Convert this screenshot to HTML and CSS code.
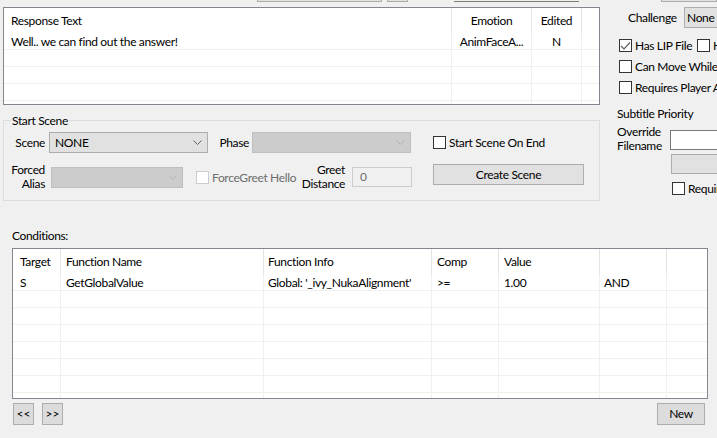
FILE: index.html
```html
<!DOCTYPE html>
<html>
<head>
<meta charset="utf-8">
<link rel="stylesheet" href="styles.css">
</head>
<body>
<div class="top">
  <span class="tp tp1"></span><span class="tp tp2"></span><span class="tp tp3"></span><span class="tp tp4"></span>
</div>
<div class="main">
  <div class="left">
    <div class="lv lv-resp">
      <div class="row hdr"><div class="c r1 first">Response Text</div><div class="c r2 ctr">Emotion</div><div class="c r3 ctr">Edited</div><div class="c r4"></div></div>
      <div class="row"><div class="c r1 first">Well.. we can find out the answer!</div><div class="c r2 ctr">AnimFaceA...</div><div class="c r3 ctr">N</div><div class="c r4"></div></div>
      <div class="row"><div class="c r1"></div><div class="c r2"></div><div class="c r3"></div><div class="c r4"></div></div>
      <div class="row"><div class="c r1"></div><div class="c r2"></div><div class="c r3"></div><div class="c r4"></div></div>
      <div class="row"><div class="c r1"></div><div class="c r2"></div><div class="c r3"></div><div class="c r4"></div></div>
      <div class="row"><div class="c r1"></div><div class="c r2"></div><div class="c r3"></div><div class="c r4"></div></div>
    </div>
    <div class="group">
      <div class="gtitle">Start Scene</div>
      <div class="grow grow1">
        <div class="lbl lbl-scene">Scene</div>
        <div class="combo combo-scene"><span>NONE</span><svg class="chev" width="9" height="5" viewBox="0 0 9 5"><path d="M0.5 0.5 L4.5 4.5 L8.5 0.5" fill="none" stroke="#606060" stroke-width="1"/></svg></div>
        <div class="lbl lbl-phase">Phase</div>
        <div class="combo combo-phase dis"><span></span><svg class="chev" width="9" height="5" viewBox="0 0 9 5"><path d="M0.5 0.5 L4.5 4.5 L8.5 0.5" fill="none" stroke="#b4b4b4" stroke-width="1"/></svg></div>
        <div class="cbx cbx-sse"><svg class="box" width="13" height="13" viewBox="0 0 13 13"><rect x="0.5" y="0.5" width="12" height="12" fill="#fff" stroke="#333"/></svg><span>Start Scene On End</span></div>
      </div>
      <div class="grow grow2">
        <div class="lbl lbl-alias">Forced<br>Alias</div>
        <div class="combo combo-alias dis"><span></span><svg class="chev" width="9" height="5" viewBox="0 0 9 5"><path d="M0.5 0.5 L4.5 4.5 L8.5 0.5" fill="none" stroke="#b4b4b4" stroke-width="1"/></svg></div>
        <div class="cbx cbx-fg disabled"><svg class="box" width="13" height="13" viewBox="0 0 13 13"><rect x="0.5" y="0.5" width="12" height="12" fill="#fff" stroke="#cccccc"/></svg><span>ForceGreet Hello</span></div>
        <div class="lbl lbl-greet">Greet<br>Distance</div>
        <div class="tbox tbox-greet">0</div>
        <div class="btn btn-create">Create Scene</div>
      </div>
    </div>
  </div>
  <div class="right">
    <div class="chal"><span class="chal-lbl">Challenge</span><div class="combo combo-chal"><span>None</span></div></div>
    <div class="rrow rrow1">
      <div class="cbx cbx-lip"><svg class="box" width="13" height="13" viewBox="0 0 13 13"><rect x="0.5" y="0.5" width="12" height="12" fill="#fff" stroke="#333"/><path d="M2 7 L5 10 L11 3.5" fill="none" stroke="#606060" stroke-width="1.2"/></svg><span>Has LIP File</span></div>
      <div class="cbx"><svg class="box" width="13" height="13" viewBox="0 0 13 13"><rect x="0.5" y="0.5" width="12" height="12" fill="#fff" stroke="#333"/></svg><span>Has Voice</span></div>
    </div>
    <div class="rrow">
      <div class="cbx"><svg class="box" width="13" height="13" viewBox="0 0 13 13"><rect x="0.5" y="0.5" width="12" height="12" fill="#fff" stroke="#333"/></svg><span>Can Move While Greeting</span></div>
    </div>
    <div class="rrow">
      <div class="cbx"><svg class="box" width="13" height="13" viewBox="0 0 13 13"><rect x="0.5" y="0.5" width="12" height="12" fill="#fff" stroke="#333"/></svg><span>Requires Player Activation</span></div>
    </div>
    <div class="sub-lbl">Subtitle Priority</div>
    <div class="ovr">
      <div class="ovr-lbl">Override<br>Filename</div>
      <div class="tbox tbox-ovr"></div>
    </div>
    <div class="btn btn-ovr"></div>
    <div class="rrow rrow-req">
      <div class="cbx"><svg class="box" width="13" height="13" viewBox="0 0 13 13"><rect x="0.5" y="0.5" width="12" height="12" fill="#fff" stroke="#333"/></svg><span>Requires</span></div>
    </div>
  </div>
</div>
<div class="cond-lbl">Conditions:</div>
<div class="lv lv-cond">
  <div class="row hdr"><div class="c k1 first">Target</div><div class="c k2">Function Name</div><div class="c k3">Function Info</div><div class="c k4">Comp</div><div class="c k5">Value</div><div class="c k6"></div><div class="c k7"></div></div>
  <div class="row"><div class="c k1 first">S</div><div class="c k2">GetGlobalValue</div><div class="c k3">Global: '_ivy_NukaAlignment'</div><div class="c k4">&gt;=</div><div class="c k5">1.00</div><div class="c k6">AND</div><div class="c k7"></div></div>
  <div class="row"><div class="c k1"></div><div class="c k2"></div><div class="c k3"></div><div class="c k4"></div><div class="c k5"></div><div class="c k6"></div><div class="c k7"></div></div>
  <div class="row"><div class="c k1"></div><div class="c k2"></div><div class="c k3"></div><div class="c k4"></div><div class="c k5"></div><div class="c k6"></div><div class="c k7"></div></div>
  <div class="row"><div class="c k1"></div><div class="c k2"></div><div class="c k3"></div><div class="c k4"></div><div class="c k5"></div><div class="c k6"></div><div class="c k7"></div></div>
  <div class="row"><div class="c k1"></div><div class="c k2"></div><div class="c k3"></div><div class="c k4"></div><div class="c k5"></div><div class="c k6"></div><div class="c k7"></div></div>
  <div class="row"><div class="c k1"></div><div class="c k2"></div><div class="c k3"></div><div class="c k4"></div><div class="c k5"></div><div class="c k6"></div><div class="c k7"></div></div>
  <div class="row"><div class="c k1"></div><div class="c k2"></div><div class="c k3"></div><div class="c k4"></div><div class="c k5"></div><div class="c k6"></div><div class="c k7"></div></div>
  <div class="row"><div class="c k1"></div><div class="c k2"></div><div class="c k3"></div><div class="c k4"></div><div class="c k5"></div><div class="c k6"></div><div class="c k7"></div></div>
</div>
<div class="bottom">
  <div class="btn btn-nav">&lt;&lt;</div>
  <div class="btn btn-nav">&gt;&gt;</div>
  <div class="btn btn-new">New</div>
</div>
</body>
</html>
```
FILE: styles.css
```css
* { box-sizing: border-box; }
html, body { margin: 0; padding: 0; }
body {
  width: 717px;
  height: 438px;
  overflow: hidden;
  background: #f0f0f0;
  font-family: Lato, "Liberation Sans", sans-serif;
  font-size: 12px;
  letter-spacing: -0.35px;
  color: #000;
  white-space: nowrap;
}

/* top strip (bottoms of controls above the view) */
.top { display: flex; height: 2px; }
.tp { height: 2px; border: 1px solid #adadad; border-top: 0; background: #e1e1e1; }
.tp1 { margin-left: 257px; width: 135px; }
.tp2 { margin-left: 5px; width: 22px; }
.tp3 { margin-left: 46px; width: 135px; height: 2px; border: 0; border-bottom: 1px solid #7a7a7a; background: #f0f0f0; }
.tp4 { margin-left: 82px; width: 60px; }

.main { display: flex; }
.left { width: 597px; margin-left: 3px; flex: none; }
.right { flex: 1; overflow: hidden; }

/* list views */
.lv { background: #fff; border: 1px solid #828790; overflow: hidden; }
.row { display: flex; height: 17px; border-bottom: 1px solid #f0f0f0; line-height: 17px; }
.row.hdr { height: 25px; border-bottom: 0; line-height: 25px; }
.c { flex: none; height: 100%; border-right: 1px solid #f0f0f0; padding-left: 5px; overflow: hidden; }
.hdr .c { border-right-color: #e5e5e5; }
.c.first { padding-left: 7px; }
.c.ctr { padding-left: 0; text-align: center; }

.lv-resp { margin-top: 5px; height: 98px; }
.r1 { width: 448px; }
.r2 { width: 80px; }
.r3 { width: 50px; }
.r4 { width: 17px; border-right: 0; }

.lv-cond { margin-left: 12px; margin-top: 5px; width: 696px; height: 151px; }
.k1 { width: 48px; }
.k2 { width: 203px; }
.k3 { width: 168px; padding-left: 4px; }
.k4 { width: 67px; }
.k5 { width: 101px; }
.k6 { width: 67px; padding-left: 4px; }
.k7 { width: 40px; border-right: 0; }

/* group box */
.group { margin-top: 15px; border: 1px solid #dcdcdc; height: 81px; }
.gtitle { margin: -8px 0 0 7px; width: fit-content; padding: 0 1px; line-height: 15px; background: #f0f0f0; }
.grow { display: flex; }
.grow1 { margin-top: 4px; height: 21px; align-items: center; }
.grow2 { margin-top: 10px; height: 28px; align-items: flex-start; }

.lbl { flex: none; text-align: right; }
.lbl-scene { width: 41px; }
.lbl-phase { width: 41px; }
.lbl-alias { width: 41px; line-height: 14px; }
.lbl-greet { width: 49px; line-height: 14px; }

.combo {
  flex: none;
  height: 21px;
  border: 1px solid #adadad;
  background: #e1e1e1;
  display: flex;
  align-items: center;
  justify-content: space-between;
  padding: 0 5px 0 5px;
}
.combo.dis { background: #cccccc; border-color: #bfbfbf; }
.combo-scene { margin-left: 4px; width: 159px; }
.combo-phase { margin-left: 3px; width: 159px; }
.combo-alias { margin-left: 6px; width: 132px; margin-top: 4px; }
.chev { display: block; flex: none; }

.cbx { display: flex; align-items: center; flex: none; }
.cbx .box { display: block; flex: none; margin-right: 3px; }
.cbx.disabled { color: #6d6d6d; }
.cbx-sse { margin-left: 22px; }
.cbx-fg { margin-left: 13px; width: 100px; margin-top: 8px; height: 13px; }

.tbox {
  flex: none;
  height: 20px;
  border: 1px solid #7a7a7a;
  background: #fff;
  line-height: 18px;
  padding-left: 7px;
}
.tbox-greet { margin-left: 7px; margin-top: 4px; width: 60px; border-color: #cccccc; background: #f0f0f0; color: #6d6d6d; }

.btn {
  flex: none;
  border: 1px solid #adadad;
  background: #e1e1e1;
  text-align: center;
}
.btn-create { margin-left: 21px; margin-top: 1px; width: 151px; height: 21px; line-height: 19px; }

/* right column */
.chal { margin-top: 5px; height: 21px; display: flex; align-items: center; padding-left: 28px; }
.chal-lbl { flex: none; width: 56px; }
.combo-chal { width: 70px; padding-left: 2px; }
.rrow { display: flex; align-items: center; height: 21px; padding-left: 19px; }
.rrow1 { margin-top: 7px; }
.cbx-lip { width: 78px; }
.sub-lbl { margin-top: 8px; padding-left: 17px; line-height: 15px; }
.ovr { display: flex; margin-top: 4px; padding-left: 17px; }
.ovr-lbl { flex: none; width: 53px; line-height: 14px; }
.tbox-ovr { margin-top: 5px; width: 60px; }
.btn-ovr { margin-top: 1px; margin-left: 71px; width: 60px; height: 20px; }
.rrow-req { margin-top: 4px; padding-left: 72px; }

/* conditions */
.cond-lbl { margin-top: 27px; padding-left: 12px; line-height: 15px; }
.bottom { display: flex; margin-top: 4px; padding-left: 13px; }
.btn-nav { width: 21px; height: 22px; line-height: 20px; margin-right: 8px; background: #dcdcdc; letter-spacing: 0; }
.btn-new { margin-left: auto; margin-right: 12px; width: 48px; height: 22px; line-height: 20px; background: #dcdcdc; }
```
